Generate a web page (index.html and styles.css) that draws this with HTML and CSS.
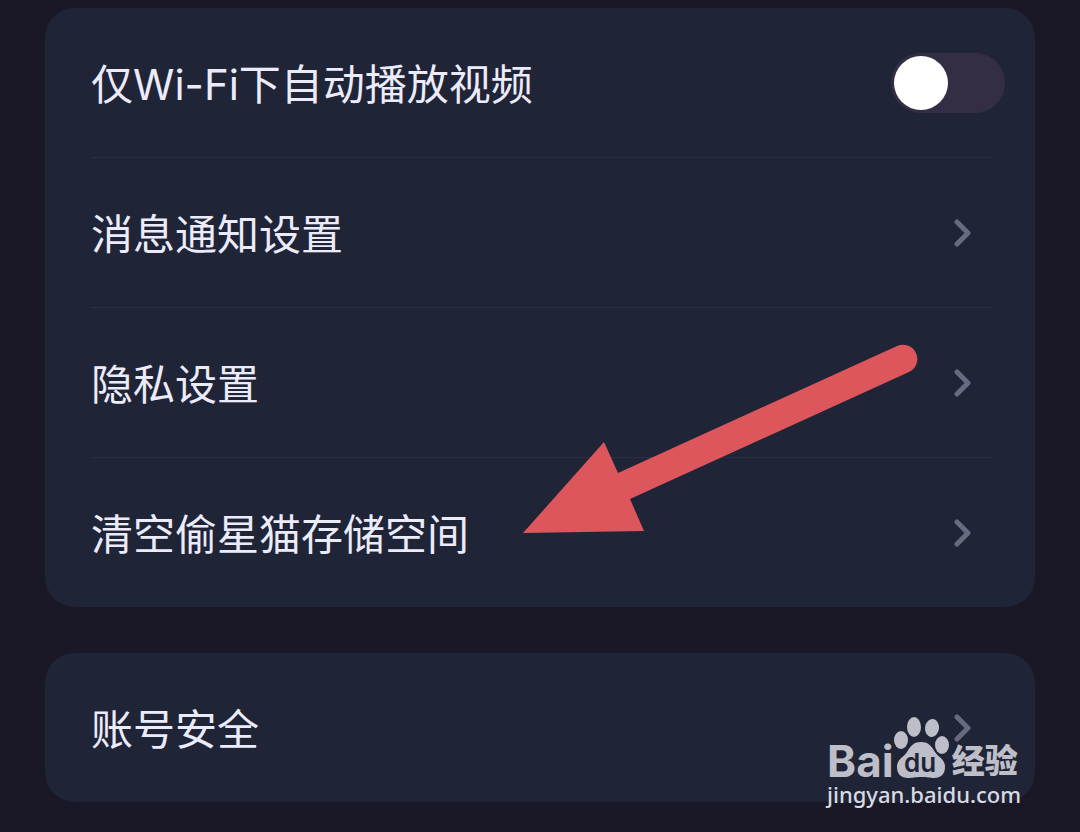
FILE: index.html
```html
<!DOCTYPE html>
<html lang="zh-CN">
<head>
    <meta charset="UTF-8">
    <meta name="viewport" content="width=device-width, initial-scale=1.0">
    <title>设置</title>
    <link rel="stylesheet" href="styles.css">
</head>
<body>
    <main class="settings">
        <section class="card">
            <div class="row">
                <label for="autoplay">仅Wi-Fi下自动播放视频</label>
                <input type="checkbox" role="switch" id="autoplay" class="switch">
            </div>
            <a href="#notifications" class="row">
                <span>消息通知设置</span>
                <svg class="chevron" viewBox="0 0 18 28" aria-hidden="true"><path d="M3 3 L14 14 L3 25"/></svg>
            </a>
            <a href="#privacy" class="row">
                <span>隐私设置</span>
                <svg class="chevron" viewBox="0 0 18 28" aria-hidden="true"><path d="M3 3 L14 14 L3 25"/></svg>
            </a>
            <a href="#storage" class="row last">
                <span>清空偷星猫存储空间</span>
                <svg class="chevron" viewBox="0 0 18 28" aria-hidden="true"><path d="M3 3 L14 14 L3 25"/></svg>
            </a>
            <!-- arrow pointing at the storage row -->
            <svg class="arrow" viewBox="0 0 395 190" aria-hidden="true">
                <path d="M0 189 L81 98 L95 129 L374 2 A14 14 0 0 1 386 28 L107 155 L121 187 Z"/>
            </svg>
        </section>

        <section class="card">
            <a href="#security" class="row last">
                <span>账号安全</span>
                <svg class="chevron" viewBox="0 0 18 28" aria-hidden="true"><path d="M3 3 L14 14 L3 25"/></svg>
            </a>
        </section>
    </main>

    <div class="watermark">
        <div class="logo">
            <span class="logo-bai">Bai</span>
            <svg class="paw" viewBox="0 0 58 62" role="img" aria-label="du">
                <ellipse cx="7" cy="24" rx="7" ry="9"/>
                <ellipse cx="20" cy="11" rx="7" ry="10"/>
                <ellipse cx="38" cy="12" rx="7" ry="9" transform="rotate(8 38 12)"/>
                <ellipse cx="48" cy="29" rx="7" ry="9"/>
                <path d="M27 26 C35 26 38 31 41 36 C44 41 51 43 51 51 C51 58 47 62 40 62 C36 62 33 61 27 61 C21 61 19 62 14 62 C7 62 3 58 3 51 C3 43 10 41 13 36 C16 31 19 26 27 26 Z"/>
                <text x="10" y="56">du</text>
            </svg>
            <span class="logo-cn">经验</span>
        </div>
        <div class="site">jingyan.baidu.com</div>
    </div>
</body>
</html>
```

FILE: styles.css
```css
* {
    box-sizing: border-box;
}
body {
    margin: 0;
    min-height: 100vh;
    position: relative;
    background-color: #1a1827;
    color: #ebebfa;
    font-family: Inter, "Noto Sans CJK SC", sans-serif;
    font-size: 42px;
    line-height: 60px;
}
.settings {
    display: flex;
    flex-direction: column;
    gap: 46px;
    padding: 8px 45px 30px;
}
.card {
    position: relative;
    padding: 0 43px 0 46px;
    border-radius: 30px;
    background-color: #202437;
}
.row {
    display: flex;
    align-items: center;
    justify-content: space-between;
    height: 150px;
    padding-right: 20px;
    border-bottom: 1px solid #2b2f41;
    color: inherit;
    text-decoration: none;
}
.row.last {
    height: 149px;
    border-bottom: none;
}
.row label,
.row span {
    padding-top: 4px;
}
.switch {
    appearance: none;
    width: 114px;
    height: 60px;
    margin: 0 -33px 0 0;
    padding: 3px;
    border-radius: 30px;
    background-color: #342e45;
    cursor: pointer;
}
.switch::before {
    content: "";
    display: block;
    width: 54px;
    height: 54px;
    border-radius: 50%;
    background-color: #fff;
}
.switch:checked::before {
    margin-left: auto;
}
.chevron {
    width: 18px;
    height: 28px;
    fill: none;
    stroke: #686b7f;
    stroke-width: 5;
    stroke-linecap: round;
    stroke-linejoin: round;
}
.arrow {
    position: absolute;
    right: 117px;
    top: 336px;
    width: 395px;
    height: 190px;
    fill: #dc565c;
}
.watermark {
    position: absolute;
    right: 59px;
    top: 716px;
    color: #bdbec7;
}
.logo {
    display: flex;
    align-items: flex-end;
    height: 62px;
}
.logo-bai {
    font-size: 44px;
    font-weight: 700;
    line-height: 34px;
}
.paw {
    flex: none;
    width: 58px;
    height: 62px;
    fill: #bdbec7;
}
.paw text {
    fill: #202437;
    font-size: 26px;
    font-weight: 600;
}
.logo-cn {
    font-size: 33px;
    font-weight: 900;
    line-height: 34px;
    white-space: nowrap;
}
.site {
    color: #d9dae1;
    font-family: "Noto Sans", sans-serif;
    font-size: 22px;
    font-weight: 500;
    line-height: 32px;
}
```
